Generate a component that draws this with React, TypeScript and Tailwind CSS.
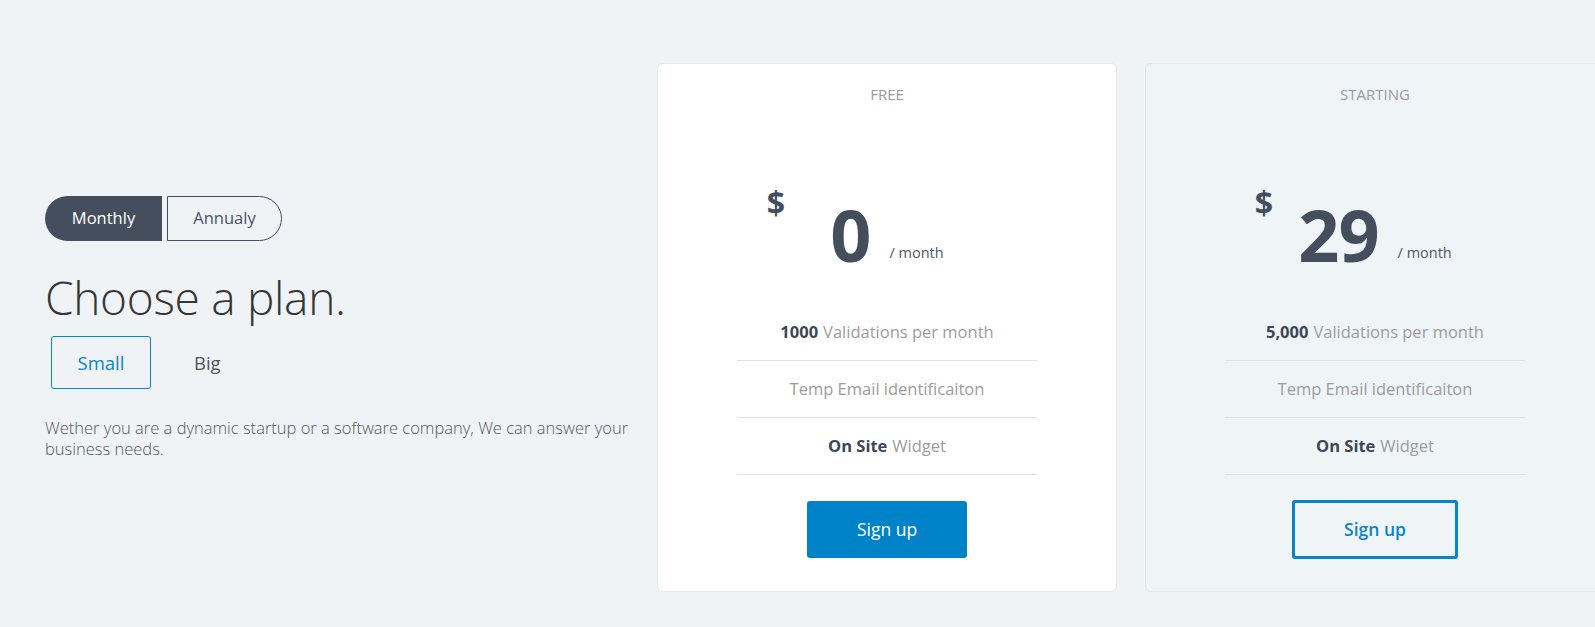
import React, { useState } from 'react';

type Plan = {
  name: string;
  price: string;
  validations: string;
  highlighted: boolean;
};

const plans: Plan[] = [
  { name: 'FREE', price: '0', validations: '1000', highlighted: true },
  { name: 'STARTING', price: '29', validations: '5,000', highlighted: false },
];

function PlanCard({ plan }: { plan: Plan }) {
  return (
    <div
      className={`flex-none w-[460px] h-[529px] rounded-[6px] border flex flex-col items-center ${
        plan.highlighted ? 'bg-white border-[#e4e9ee]' : 'bg-[#eff4f7] border-[#e2e7ec]'
      }`}
    >
      <div className="mt-[20px] text-[15px] text-[#9a9a9a] leading-[20px]">{plan.name}</div>

      {/* price: $ sits left, amount + period centred */}
      <div className="mt-[83px] w-full grid grid-cols-[127px_1fr_127px] items-start">
        <span className="justify-self-end text-[32px] font-bold text-[#444e5d] leading-none">$</span>
        <div className="mt-[11px] flex items-end justify-center gap-[19px]">
          <span className="text-[72px] font-bold text-[#444e5d] leading-none tracking-[-1px]">
            {plan.price}
          </span>
          <span className="mb-[10px] text-[14.5px] text-[#4f5868] leading-none">/ month</span>
        </div>
        <span />
      </div>

      <ul className="mt-[34px] w-[300px] text-[16.5px] text-center">
        <li className="h-[57px] flex items-center justify-center border-b border-[#dfe3e7]">
          <span className="font-bold text-[#3d4656]">{plan.validations}</span>
          <span className="ml-[5px] text-[#9c9c9c]">Validations per month</span>
        </li>
        <li className="h-[57px] flex items-center justify-center border-b border-[#dfe3e7] text-[#9c9c9c]">
          Temp Email identificaiton
        </li>
        <li className="h-[57px] flex items-center justify-center border-b border-[#dfe3e7]">
          <span className="font-bold text-[#3d4656]">On Site</span>
          <span className="ml-[5px] text-[#9c9c9c]">Widget</span>
        </li>
      </ul>

      {plan.highlighted ? (
        <button
          type="button"
          className="mt-[26px] w-[160px] h-[57px] rounded-[3px] bg-[#0082c8] text-white text-[17.5px]"
        >
          Sign up
        </button>
      ) : (
        <button
          type="button"
          className="mt-[25px] w-[166px] h-[59px] rounded-[3px] border-[3px] border-[#0a84c8] text-[#0a84c8] text-[17.5px] font-semibold"
        >
          Sign up
        </button>
      )}
    </div>
  );
}

export default function App() {
  const [billing, setBilling] = useState<'monthly' | 'annualy'>('monthly');
  const [size, setSize] = useState<'small' | 'big'>('small');

  return (
    <div
      className="min-h-[627px] w-full overflow-hidden bg-[#eff3f6]"
      style={{ fontFamily: '"Open Sans", "Noto Sans", sans-serif' }}
    >
      <div className="flex items-center pt-[63px] pl-[45px]">
        {/* left column */}
        <div className="flex-none w-[612px] flex flex-col">
          <div className="flex gap-[5px]">
            <button
              type="button"
              onClick={() => setBilling('monthly')}
              className={`w-[117px] h-[45px] rounded-l-full text-[16.5px] ${
                billing === 'monthly' ? 'bg-[#454e5d] text-white' : 'border border-[#454e5d] text-[#454e5d]'
              }`}
            >
              Monthly
            </button>
            <button
              type="button"
              onClick={() => setBilling('annualy')}
              className={`w-[115px] h-[45px] rounded-r-full text-[16.5px] ${
                billing === 'annualy' ? 'bg-[#454e5d] text-white' : 'border border-[#454e5d] text-[#4a5363]'
              }`}
            >
              Annualy
            </button>
          </div>

          <h1 className="mt-[28px] text-[46px] font-light text-[#363636] leading-[56px] tracking-[-0.3px]">
            Choose a plan.
          </h1>

          <div className="mt-[11px] ml-[6px] flex items-center">
            <button
              type="button"
              onClick={() => setSize('small')}
              className={`w-[100px] h-[53px] rounded-[3px] text-[18.5px] ${
                size === 'small' ? 'border border-[#0a84c8] text-[#0a84c8]' : 'text-[#555]'
              }`}
            >
              Small
            </button>
            <button
              type="button"
              onClick={() => setSize('big')}
              className={`ml-[18px] h-[53px] px-[25px] rounded-[3px] text-[18.5px] ${
                size === 'big' ? 'border border-[#0a84c8] text-[#0a84c8]' : 'text-[#555]'
              }`}
            >
              Big
            </button>
          </div>

          <p className="mt-[28px] w-[600px] text-[16.5px] font-light text-[#555] leading-[21px]">
            Wether you are a dynamic startup or a software company, We can answer your business needs.
          </p>
        </div>

        <div className="flex gap-[28px]">
          {plans.map((p) => (
            <PlanCard key={p.name} plan={p} />
          ))}
        </div>
      </div>
    </div>
  );
}
